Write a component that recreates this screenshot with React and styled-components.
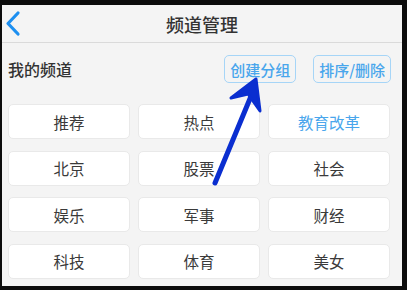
import React from 'react';
import styled, { createGlobalStyle } from 'styled-components';

const Global = createGlobalStyle`
  body {
    margin: 0;
    background: #0c0c0c;
    font-family: "Noto Sans CJK SC", "Noto Sans", sans-serif;
  }
`;

const Frame = styled.div`
  padding: 5px 5px 4px 2px;
  width: 407px;
  height: 290px;
  box-sizing: border-box;
`;

const Screen = styled.div`
  position: relative;
  width: 400px;
  height: 281px;
  background: #f4f4f4;
  overflow: hidden;
`;

const Header = styled.div`
  height: 37px;
  border-bottom: 1px solid #dadada;
  display: flex;
  align-items: center;
  justify-content: center;
  position: relative;
`;

const Back = styled.svg`
  position: absolute;
  left: 2px;
  top: 5px;
`;

const Title = styled.div`
  font-size: 18px;
  font-weight: 500;
  color: #333;
`;

const SectionRow = styled.div`
  display: flex;
  align-items: center;
  padding: 12px 11px 0 6px;
  height: 28px;
`;

const SectionTitle = styled.div`
  flex: 1;
  font-size: 16px;
  font-weight: 500;
  color: #333;
`;

const Actions = styled.div`
  display: flex;
  gap: 17px;
`;

const ActionButton = styled.div`
  height: 28px;
  box-sizing: border-box;
  padding: 0 5px;
  display: flex;
  align-items: center;
  border: 1px solid #a6d5f7;
  border-radius: 5px;
  color: #49a6ec;
  font-size: 15px;
  font-weight: 500;
`;

const Grid = styled.div`
  display: grid;
  grid-template-columns: repeat(3, 1fr);
  column-gap: 8px;
  row-gap: 11.5px;
  margin: 21px 12px 0 6px;
`;

const Tile = styled.div`
  height: 35px;
  box-sizing: border-box;
  background: #fff;
  border: 1px solid #e9e9e9;
  border-radius: 5px;
  display: flex;
  align-items: center;
  justify-content: center;
  font-size: 15.5px;
  color: ${(p) => (p.$active ? '#49a6ec' : '#3a3a3a')};
`;

const Pointer = styled.svg`
  position: absolute;
  left: 0;
  top: 0;
  pointer-events: none;
`;

const channels = ['推荐', '热点', '教育改革', '北京', '股票', '社会', '娱乐', '军事', '财经', '科技', '体育', '美女'];

export default function App() {
  return (
    <Frame>
      <Global />
      <Screen>
        <Header>
          <Back width="18" height="28" viewBox="0 0 18 28">
            <path d="M14 3 L4 13.5 L14 24" fill="none" stroke="#1d8ff0" strokeWidth="3.2" strokeLinecap="round" strokeLinejoin="round" />
          </Back>
          <Title>频道管理</Title>
        </Header>
        <SectionRow>
          <SectionTitle>我的频道</SectionTitle>
          <Actions>
            <ActionButton>创建分组</ActionButton>
            <ActionButton>排序/删除</ActionButton>
          </Actions>
        </SectionRow>
        <Grid>
          {channels.map((c) => (
            <Tile key={c} $active={c === '教育改革'}>{c}</Tile>
          ))}
        </Grid>
        <Pointer width="400" height="281" viewBox="0 0 400 281">
          <path d="M213 178 L252 84" stroke="#0a2ed0" strokeWidth="5" strokeLinecap="round" />
          <path d="M254 74 L229 93 L246 89 L258 106 Z" fill="#0a2ed0" stroke="#0a2ed0" strokeWidth="3" strokeLinejoin="round" />
        </Pointer>
      </Screen>
    </Frame>
  );
}
